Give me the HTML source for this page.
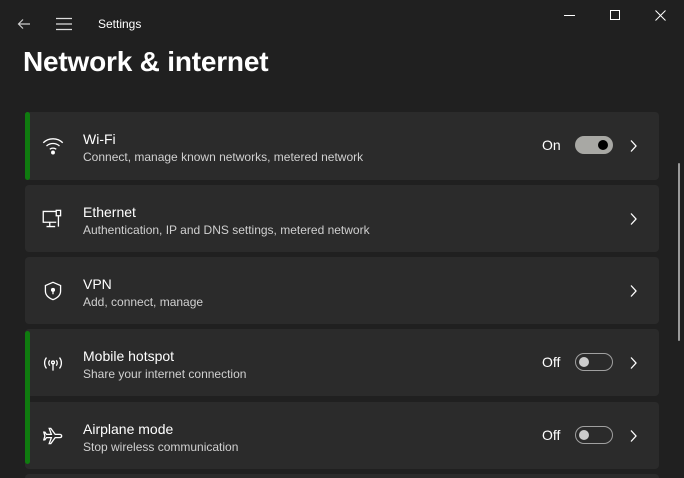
<!DOCTYPE html><html style="overflow:hidden;height:478px"><head><style>
body{margin:0;width:684px;height:478px;background:#202020;overflow:hidden;font-family:"Segoe UI","Liberation Sans",sans-serif;color:#fff;position:relative}
.abs{position:absolute}
.card{position:absolute;left:25px;width:634px;height:67px;background:#2b2b2b;border-radius:4px}
.t{position:absolute;left:58px;top:19px;font-size:14px;color:#fff}
.s{position:absolute;left:58px;top:38px;font-size:12px;color:#d0d0d0}
.ic{position:absolute;left:15px;top:21px;width:26px;height:26px}
.chev{position:absolute;left:604px;top:27px}
.lab{position:absolute;left:517px;top:25px;font-size:14px}
.tg{position:absolute;left:550px;top:24px;width:38px;height:18px;border-radius:10px;box-sizing:border-box}
.green{position:absolute;left:25px;width:5px;background:#0f7b0f;border-radius:3px}
</style></head><body>
<svg class="abs" style="left:16px;top:16px" width="16" height="16" viewBox="0 0 16 16"><path d="M14 8H2.5M7 3.5L2.5 8 7 12.5" stroke="#ccc" stroke-width="1.2" fill="none"/></svg>
<svg class="abs" style="left:56px;top:17px" width="16" height="14"><path d="M0 1.5h16M0 7h16M0 12.5h16" stroke="#ddd" stroke-width="1.2"/></svg>
<div class="abs" style="left:98px;top:17px;font-size:12px">Settings</div>
<svg class="abs" style="left:564px;top:10px" width="12" height="12"><path d="M0 5.5h11" stroke="#fff"/></svg>
<svg class="abs" style="left:610px;top:10px" width="12" height="12"><rect x=".5" y=".5" width="9" height="9" fill="none" stroke="#fff"/></svg>
<svg class="abs" style="left:655px;top:10px" width="12" height="12"><path d="M.5.5l10 10M10.5.5l-10 10" stroke="#fff"/></svg>
<div class="abs" style="left:23px;top:46px;font-size:28px;font-weight:600;letter-spacing:-0.2px">Network &amp; internet</div>

<div class="card" style="top:112px;height:68px">
<svg class="ic" viewBox="0 0 24 24" fill="none" stroke="#fff" stroke-width="1.2"><path d="M3 9a13 13 0 0 1 18 0M6 12a9 9 0 0 1 12 0M9 15a5 5 0 0 1 6 0"/><circle cx="12" cy="18" r="1.2" fill="#fff"/></svg>
<div class="t">Wi-Fi</div><div class="s">Connect, manage known networks, metered network</div>
<div class="lab">On</div><div class="tg" style="background:#a8a8a4"><div class="abs" style="left:23px;top:4px;width:10px;height:10px;border-radius:50%;background:#000"></div></div>
<svg class="chev" width="10" height="14"><path d="M2 1.5l5 5.5-5 5.5" stroke="#fff" stroke-width="1.3" fill="none"/></svg></div>
<div class="green" style="top:112px;height:68px"></div>

<div class="card" style="top:185px">
<svg class="ic" viewBox="0 0 24 24" fill="none" stroke="#fff" stroke-width="1.2"><path d="M15 5H3v10h12M6 19h8M9 15v4M17 9v10"/><rect x="15" y="4" width="4" height="5"/></svg>
<div class="t">Ethernet</div><div class="s">Authentication, IP and DNS settings, metered network</div>
<svg class="chev" width="10" height="14"><path d="M2 1.5l5 5.5-5 5.5" stroke="#fff" stroke-width="1.3" fill="none"/></svg></div>

<div class="card" style="top:257px">
<svg class="ic" viewBox="0 0 24 24" fill="none" stroke="#fff" stroke-width="1.2"><path d="M12 4l7 3v5c0 4-3 6.5-7 8-4-1.5-7-4-7-8V7z"/><circle cx="12" cy="11" r="1.3" fill="#fff"/><path d="M12 11v4"/></svg>
<div class="t">VPN</div><div class="s">Add, connect, manage</div>
<svg class="chev" width="10" height="14"><path d="M2 1.5l5 5.5-5 5.5" stroke="#fff" stroke-width="1.3" fill="none"/></svg></div>

<div class="card" style="top:329px">
<svg class="ic" viewBox="0 0 24 24" fill="none" stroke="#fff" stroke-width="1.2"><path d="M6 7a8 8 0 0 0 0 10M18 7a8 8 0 0 1 0 10M9 9.5a4 4 0 0 0 0 5M15 9.5a4 4 0 0 1 0 5M12 12v7"/><circle cx="12" cy="11.5" r="1.3"/></svg>
<div class="t">Mobile hotspot</div><div class="s">Share your internet connection</div>
<div class="lab">Off</div><div class="tg" style="border:1px solid #a0a0a0"><div class="abs" style="left:3px;top:3px;width:10px;height:10px;border-radius:50%;background:#ccc"></div></div>
<svg class="chev" width="10" height="14"><path d="M2 1.5l5 5.5-5 5.5" stroke="#fff" stroke-width="1.3" fill="none"/></svg></div>

<div class="card" style="top:402px">
<svg class="ic" viewBox="0 0 24 24" fill="none" stroke="#fff" stroke-width="1.2"><path d="M20 12c0-1-1-1.5-2-1.5h-4L10 5H8.5l2 5.5H6L4.5 8.5H3.5l1 3.5-1 3.5h1L6 13.5h4.5l-2 5.5H10l4-5.5h4c1 0 2-.5 2-1.5z"/></svg>
<div class="t">Airplane mode</div><div class="s">Stop wireless communication</div>
<div class="lab">Off</div><div class="tg" style="border:1px solid #a0a0a0"><div class="abs" style="left:3px;top:3px;width:10px;height:10px;border-radius:50%;background:#ccc"></div></div>
<svg class="chev" width="10" height="14"><path d="M2 1.5l5 5.5-5 5.5" stroke="#fff" stroke-width="1.3" fill="none"/></svg></div>
<div class="green" style="top:331px;height:133px"></div>

<div class="card" style="top:474px;height:4px;border-radius:4px 4px 0 0"></div>
<div class="abs" style="left:678px;top:163px;width:2px;height:178px;background:#9a9a9a;border-radius:1px"></div>
</body></html>
